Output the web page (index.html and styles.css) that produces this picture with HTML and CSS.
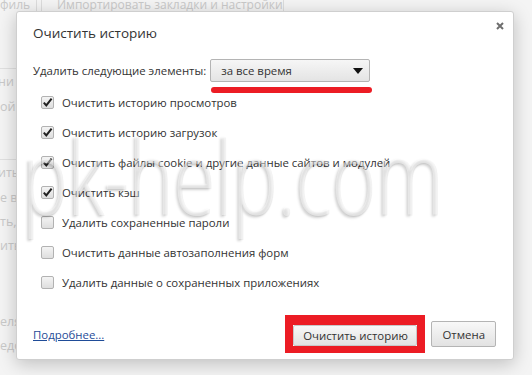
FILE: index.html
```html
<!DOCTYPE html>
<html lang="ru">
<head>
    <meta charset="UTF-8">
    <title>Очистить историю</title>
    <link rel="stylesheet" href="styles.css">
</head>
<body>
    <!-- faded settings page behind the overlay -->
    <div class="page">
        <div class="page-top">
            <span class="page-btn first">филь</span>
            <span class="page-btn">Импортировать закладки и настройки</span>
        </div>
        <div class="page-col">
            <div class="page-box">ни</div>
            <div class="page-line">ой</div>
            <div class="page-box gap">ить</div>
            <div class="page-line">е в</div>
            <div class="page-line">ть,</div>
            <div class="page-line">ить</div>
            <div class="page-line far">еля</div>
            <div class="page-line">едо</div>
        </div>
    </div>

    <div class="dialog">
        <h1 class="dialog-title">Очистить историю</h1>
        <svg class="close" width="10" height="10" viewBox="0 0 10 10">
            <path d="M2 2 L8 8 M8 2 L2 8" stroke="#6e6e6e" stroke-width="2"/>
        </svg>

        <div class="period-row">
            <span>Удалить следующие элементы:</span>
            <div class="select">
                <span>за все время</span>
                <svg width="10" height="6" viewBox="0 0 10 6"><path d="M0 0 H10 L5 6 Z" fill="#111"/></svg>
            </div>
        </div>

        <ul class="options">
            <li><span class="check on"></span>Очистить историю просмотров</li>
            <li><span class="check on"></span>Очистить историю загрузок</li>
            <li><span class="check on"></span>Очистить файлы cookie и другие данные сайтов и модулей</li>
            <li><span class="check on"></span>Очистить кэш</li>
            <li><span class="check"></span>Удалить сохраненные пароли</li>
            <li><span class="check"></span>Очистить данные автозаполнения форм</li>
            <li><span class="check"></span>Удалить данные о сохраненных приложениях</li>
        </ul>

        <div class="dialog-footer">
            <a href="#" class="more">Подробнее...</a>
            <span class="highlight"><button class="btn wide">Очистить историю</button></span>
            <button class="btn">Отмена</button>
        </div>
    </div>

    <div class="watermark">pk-help.com</div>
</body>
</html>
```

FILE: styles.css
```css
body {
    margin: 0;
    width: 532px;
    height: 375px;
    overflow: hidden;
    background: #f4f4f4;
    font-family: "Open Sans", "Noto Sans", sans-serif;
    font-size: 11.4px;
    color: #333;
    position: relative;
}

/* background page */
.page {
    color: #c9c9c9;
}

.page-top {
    display: flex;
    height: 11px;
    line-height: 9px;
    overflow: hidden;
    font-size: 12px;
    white-space: nowrap;
}

.page-btn {
    padding: 0 0 0 15px;
    width: 226px;
    border-right: 1px solid #dcdcdc;
    border-left: 1px solid #dcdcdc;
}

.page-btn.first {
    width: 36px;
    margin-right: 4px;
    padding-left: 0;
    border-left: none;
}

.page-col {
    padding-top: 57px;
    width: 20px;
    font-size: 12.5px;
    white-space: nowrap;
}

.page-box {
    border-top: 1px solid #e0e0e0;
    height: 26px;
    line-height: 26px;
    margin-left: -2px;
}

.page-box.gap {
    margin-top: 40px;
}

.page-line {
    height: 24px;
    line-height: 24px;
}

.page-line.far {
    margin-top: 52px;
}

/* dialog */
.dialog {
    position: absolute;
    left: 16px;
    top: 11px;
    width: 498px;
    height: 349px;
    box-sizing: border-box;
    padding: 0 17px 0 16px;
    background: #fff;
    border: 1px solid #cfcfcf;
    border-radius: 3px;
    box-shadow: 0 4px 18px rgba(0, 0, 0, 0.22);
}

.dialog-title {
    margin: 11px 0 0;
    font-size: 13.5px;
    font-weight: normal;
    line-height: 20px;
    color: #333;
}

.close {
    position: absolute;
    right: 8px;
    top: 9px;
}

.period-row {
    display: flex;
    align-items: center;
    margin-top: 16px;
    gap: 4px;
}

.select {
    position: relative;
    display: flex;
    align-items: center;
    justify-content: space-between;
    width: 160px;
    height: 23px;
    box-sizing: border-box;
    padding: 0 6px 0 10px;
    border: 1px solid #b4b4b4;
    border-radius: 2px;
    background: linear-gradient(#f6f6f6, #e4e4e4);
}

/* red marker under the select */
.select::after {
    content: "";
    position: absolute;
    left: 0;
    right: -3px;
    top: 27px;
    height: 6px;
    border-radius: 3px;
    background: #ec1c24;
}

.options {
    list-style: none;
    margin: 5px 0 0;
    padding: 0 0 0 8px;
}

.options li {
    display: flex;
    align-items: center;
    gap: 8px;
    height: 30px;
}

.check {
    width: 13px;
    height: 13px;
    box-sizing: border-box;
    border: 1px solid #b2b2b2;
    border-radius: 2px;
    background: linear-gradient(#f4f4f4, #dedede);
}

.check.on {
    background: url("data:image/svg+xml,%3Csvg xmlns='http://www.w3.org/2000/svg' width='11' height='11' viewBox='0 0 11 11'%3E%3Cpath d='M1.8 5.6 L4.3 8.4 L9.6 1.6' fill='none' stroke='%23222' stroke-width='2'/%3E%3C/svg%3E") center / 11px 11px no-repeat, linear-gradient(#f4f4f4, #dedede);
}

.dialog-footer {
    display: flex;
    align-items: center;
    margin-top: 18px;
    height: 38px;
}

.more {
    color: #1f4c98;
    margin-right: auto;
}

.highlight {
    display: flex;
    border: 8px solid #ec1c24;
    border-top-width: 10px;
    border-bottom-width: 7px;
    margin-right: 6px;
}

.btn {
    height: 26px;
    padding: 0 10px;
    border: 1px solid #b4b4b4;
    border-radius: 2px;
    background: linear-gradient(#f8f8f8, #e2e2e2);
    font-family: inherit;
    font-size: 11.4px;
    color: #333;
    white-space: nowrap;
}

.btn.wide {
    width: 124px;
    height: 21px;
    padding: 0;
    border-color: #c8c8c8;
}

.watermark {
    position: absolute;
    left: 22px;
    top: 104px;
    font-family: "Open Sans", "Noto Sans", sans-serif;
    font-weight: 300;
    font-size: 104px;
    transform: scaleX(0.73);
    transform-origin: left top;
    color: rgba(255, 255, 255, 0.45);
    text-shadow: -2px 2px 3px rgba(0, 0, 0, 0.18), 1px 1px 1px rgba(0, 0, 0, 0.06);
    pointer-events: none;
    white-space: nowrap;
}
```
